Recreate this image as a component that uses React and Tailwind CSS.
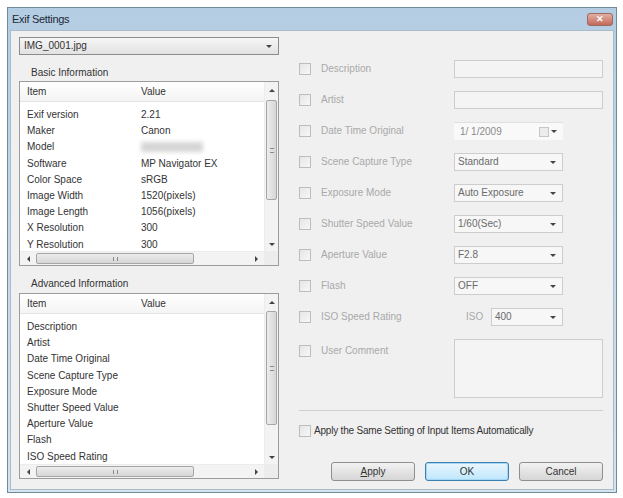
import React from 'react'

const basicRows = [
  ['Exif version', '2.21'],
  ['Maker', 'Canon'],
  ['Model', null],
  ['Software', 'MP Navigator EX'],
  ['Color Space', 'sRGB'],
  ['Image Width', '1520(pixels)'],
  ['Image Length', '1056(pixels)'],
  ['X Resolution', '300'],
  ['Y Resolution', '300'],
]

const advancedRows = [
  'Description',
  'Artist',
  'Date Time Original',
  'Scene Capture Type',
  'Exposure Mode',
  'Shutter Speed Value',
  'Aperture Value',
  'Flash',
  'ISO Speed Rating',
]

// small arrow glyph used by scrollbars and combo boxes
function Arrow({ dir = 'down', className = '' }) {
  const pts = {
    down: '0,0 6,0 3,3',
    up: '0,3 6,3 3,0',
    left: '3,0 3,6 0,3',
    right: '0,0 0,6 3,3',
  }
  const vert = dir === 'down' || dir === 'up'
  return (
    <svg width={vert ? 6 : 3} height={vert ? 3 : 6} className={className}>
      <polygon points={pts[dir]} fill="#444" />
    </svg>
  )
}

function ListBox({ rows, thumbTop, thumbH }) {
  return (
    <div className="flex h-full flex-col border border-[#9c9c9c] bg-white">
      <div className="flex min-h-0 flex-1">
        <div className="flex-1">
          <div className="flex h-[20px] items-center border-b border-[#e4e4e4] bg-gradient-to-b from-white to-[#f4f4f4] pl-[7px] text-[#333]">
            <span className="w-[114px]">Item</span>
            <span>Value</span>
          </div>
          <div className="pt-[5px]">
            {rows.map((r) => (
              <div key={r[0]} className="flex h-[16.2px] items-center pl-[7px] text-[#333]">
                <span className="w-[114px] whitespace-nowrap">{r[0]}</span>
                {r[1] === null ? (
                  <span className="h-[10px] w-[62px] bg-[#d6d6d6] blur-[2px]" />
                ) : (
                  <span className="whitespace-nowrap">{r[1]}</span>
                )}
              </div>
            ))}
          </div>
        </div>
        {/* vertical scrollbar */}
        <div className="flex w-[14px] flex-col items-center border-l border-[#ececec] bg-[#f3f3f3]">
          <div className="flex h-[16px] items-center"><Arrow dir="up" /></div>
          <div className="relative w-full flex-1">
            <div
              className="absolute left-[1px] right-[1px] flex items-center justify-center rounded-[2px] border border-[#a6a6a6] bg-gradient-to-r from-[#ececec] to-[#d6d6d6]"
              style={{ top: thumbTop, height: thumbH }}
            >
              <div className="h-[5px] w-[4px] border-y border-[#8a8a8a]" />
            </div>
          </div>
          <div className="flex h-[14px] items-center"><Arrow dir="down" /></div>
        </div>
      </div>
      {/* horizontal scrollbar */}
      <div className="flex h-[14px] border-t border-[#ececec] bg-[#f3f3f3]">
        <div className="flex flex-1 items-center">
          <div className="flex w-[16px] justify-center"><Arrow dir="left" /></div>
          <div className="flex h-[11px] w-[158px] items-center justify-center rounded-[2px] border border-[#a6a6a6] bg-gradient-to-b from-[#ececec] to-[#d6d6d6]">
            <div className="h-[4px] w-[5px] border-x border-[#8a8a8a]" />
          </div>
          <div className="flex-1" />
          <div className="flex w-[16px] justify-center"><Arrow dir="right" /></div>
        </div>
        <div className="w-[14px] bg-[#ececec]" />
      </div>
    </div>
  )
}

function Check() {
  return <div className="h-[12px] w-[12px] shrink-0 border border-[#bdbdbd] bg-gradient-to-br from-[#e6e6e6] to-[#f7f7f7]" />
}

function Combo({ value, className = 'w-[109px]' }) {
  return (
    <div className={`flex h-[18px] items-center justify-between border border-[#cdcdcd] bg-[#f7f7f7] pl-[3px] pr-[6px] text-[#6b6b6b] ${className}`}>
      <span>{value}</span>
      <Arrow dir="down" />
    </div>
  )
}

function Row({ label, children }) {
  return (
    <div className="flex h-[18px] items-center">
      <Check />
      <span className="ml-[10px] w-[133px] whitespace-nowrap text-[#a9a9a9]">{label}</span>
      {children}
    </div>
  )
}

export default function App() {
  return (
    <div
      className="h-[498px] w-[623px] bg-white pl-[7px] pt-[7px] text-[10px] leading-none"
      style={{ fontFamily: '"Liberation Sans", Arial, sans-serif' }}
    >
      <div className="flex h-[486px] w-[610px] flex-col border border-[#6f8c98] bg-gradient-to-b from-[#b4cde3] to-[#d4e3ef]">
        {/* title bar */}
        <div className="flex h-[22px] items-center justify-between pl-[4px] pr-[3px]">
          <span className="text-[11px] tracking-[-0.3px] text-[#1f2a36]">Exif Settings</span>
          <div className="flex h-[13px] w-[26px] items-center justify-center rounded-[3px] border border-[#9b6a60] bg-gradient-to-b from-[#e2b0a4] to-[#c2685a]">
            <span className="text-[9px] font-bold text-white">✕</span>
          </div>
        </div>
        {/* body */}
        <div className="mx-[2px] mb-[2px] flex flex-1 border border-[#a9bcc8] bg-[#f0f0f0] pl-[8px] pr-[10px]">
          {/* left column */}
          <div className="flex w-[260px] flex-col pt-[6px]">
            <div className="flex h-[18px] items-center justify-between border border-[#8c8c8c] bg-gradient-to-b from-[#f6f6f6] to-[#e2e2e2] pl-[4px] pr-[6px] text-[#333]">
              <span>IMG_0001.jpg</span>
              <Arrow dir="down" />
            </div>
            <div className="flex h-[26px] items-end pb-[3px] pl-[12px] text-[#333]">Basic Information</div>
            <div className="h-[185px]">
              <ListBox rows={basicRows} thumbTop={2} thumbH={100} />
            </div>
            <div className="flex h-[27px] items-end pb-[4px] pl-[12px] text-[#333]">Advanced Information</div>
            <div className="h-[186px]">
              <ListBox rows={advancedRows.map((r) => [r, ''])} thumbTop={1} thumbH={114} />
            </div>
          </div>
          {/* right column */}
          <div className="ml-[20px] flex flex-1 flex-col pt-[29px]">
            <div className="flex flex-col gap-[13px]">
              <Row label="Description">
                <div className="h-[18px] flex-1 border border-[#cdcdcd] bg-[#f4f4f4]" />
              </Row>
              <Row label="Artist">
                <div className="h-[18px] flex-1 border border-[#cdcdcd] bg-[#f4f4f4]" />
              </Row>
              <Row label="Date Time Original">
                <div className="flex h-[18px] w-[109px] items-center justify-between border-t border-[#e0e0e0] bg-[#f9f9f9] pl-[6px] pr-[6px] text-[#8a8a8a]">
                  <span>1/ 1/2009</span>
                  <div className="flex items-center gap-[2px]">
                    <div className="h-[10px] w-[10px] border border-[#c6c6c6] bg-[#ececec]" />
                    <Arrow dir="down" />
                  </div>
                </div>
              </Row>
              <Row label="Scene Capture Type"><Combo value="Standard" /></Row>
              <Row label="Exposure Mode"><Combo value="Auto Exposure" /></Row>
              <Row label="Shutter Speed Value"><Combo value="1/60(Sec)" /></Row>
              <Row label="Aperture Value"><Combo value="F2.8" /></Row>
              <Row label="Flash"><Combo value="OFF" /></Row>
              <Row label="ISO Speed Rating">
                <span className="ml-[12px] w-[25px] text-[#a9a9a9]">ISO</span>
                <Combo value="400" className="w-[72px]" />
              </Row>
              <div className="flex items-start">
                <div className="mt-[6px]"><Check /></div>
                <span className="ml-[10px] mt-[7px] w-[133px] text-[#a9a9a9]">User Comment</span>
                <div className="h-[59px] flex-1 border border-[#cdcdcd] bg-[#f4f4f4]" />
              </div>
            </div>
            <div className="mt-[12px] h-px bg-[#d0d0d0]" />
            <div className="mt-[14px] flex items-center">
              <Check />
              <span className="ml-[3px] whitespace-nowrap tracking-[-0.2px] text-[#333]">Apply the Same Setting of Input Items Automatically</span>
            </div>
            <div className="mt-[25px] flex justify-end gap-[10px]">
              <button className="h-[19px] w-[84px] rounded-[3px] border border-[#8e8f8f] bg-gradient-to-b from-[#f2f2f2] to-[#d6d6d6] text-[10px] text-[#333]">
                <span className="underline">A</span>pply
              </button>
              <button className="h-[19px] w-[84px] rounded-[3px] border border-[#3c7fb1] bg-gradient-to-b from-[#eaf6fd] to-[#bee6fd] text-[10px] text-[#333] shadow-[inset_0_0_0_1px_#a6d8f6]">
                OK
              </button>
              <button className="h-[19px] w-[84px] rounded-[3px] border border-[#8e8f8f] bg-gradient-to-b from-[#f2f2f2] to-[#d6d6d6] text-[10px] text-[#333]">
                Cancel
              </button>
            </div>
          </div>
        </div>
      </div>
    </div>
  )
}
